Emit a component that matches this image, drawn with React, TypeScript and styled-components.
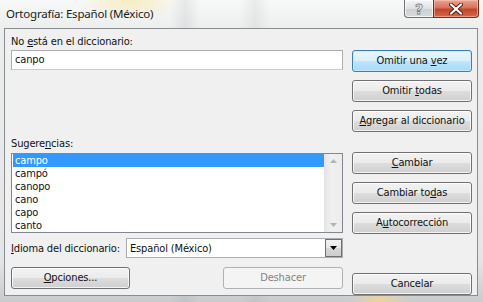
import React from 'react';
import styled, { createGlobalStyle } from 'styled-components';

const GlobalStyle = createGlobalStyle`
  html, body {
    margin: 0;
    padding: 0;
  }
  body {
    width: 483px;
    height: 302px;
    overflow: hidden;
    font-family: "DejaVu Sans Condensed", "Liberation Sans", sans-serif;
    font-size: 11px;
    letter-spacing: -0.15px;
    color: #111;
  }
`;

const Window = styled.div`
  width: 483px;
  height: 302px;
  display: flex;
  flex-direction: column;
  box-sizing: border-box;
  background:
    radial-gradient(ellipse 50px 18px at 130px 2px, rgba(250, 232, 170, 0.7), rgba(250, 232, 170, 0) 100%),
    radial-gradient(ellipse 30px 8px at 380px 300px, rgba(245, 215, 140, 0.8), rgba(245, 215, 140, 0) 100%),
    linear-gradient(to right, rgba(0, 0, 0, 0) 170px, rgba(120, 125, 130, 0.12) 185px, rgba(0, 0, 0, 0) 200px,
      rgba(0, 0, 0, 0) 240px, rgba(120, 125, 130, 0.1) 255px, rgba(0, 0, 0, 0) 270px),
    linear-gradient(to bottom, #f7f8f8, #eceded 30px, #e4e5e6 260px, #c9cbcd);
`;

const TitleBar = styled.div`
  height: 28px;
  display: flex;
  align-items: flex-start;
  padding-left: 6px;
`;

const Title = styled.div`
  font-family: "Noto Sans", "Open Sans", sans-serif;
  font-size: 11.5px;
  line-height: 16px;
  padding-top: 6px;
  color: #1a1a1a;
  letter-spacing: -0.2px;
`;

const Controls = styled.div`
  margin-left: auto;
  margin-right: 4px;
  display: flex;
`;

const HelpButton = styled.div`
  width: 29px;
  height: 18px;
  box-sizing: border-box;
  border: 1px solid #6e7276;
  border-top: none;
  border-right: none;
  border-bottom-left-radius: 4px;
  background: linear-gradient(to bottom, #f4f5f6, #dfe1e3 50%, #cdd0d3 51%, #d9dcde);
  box-shadow: inset 0 0 0 1px rgba(255, 255, 255, 0.7);
  display: flex;
  align-items: center;
  justify-content: center;
  font-family: "DejaVu Sans", sans-serif;
  font-size: 14px;
  font-weight: bold;
  color: #f4f4f4;
  -webkit-text-stroke: 0.8px #7a7e83;
`;

const CloseButton = styled.div`
  width: 46px;
  height: 18px;
  box-sizing: border-box;
  border: 1px solid #7a2a1c;
  border-top: none;
  border-bottom-right-radius: 4px;
  background: linear-gradient(to bottom, #e8a493, #d6735c 45%, #c2442a 55%, #d26a4a);
  box-shadow: inset 0 0 0 1px rgba(255, 210, 190, 0.5);
  display: flex;
  align-items: center;
  justify-content: center;
`;

const Client = styled.div`
  flex: 1;
  margin: 0 5px 6px 4px;
  border: 1px solid #8a8d90;
  background: #f0f0f0;
  padding: 6px 5px 0 6px;
  display: flex;
  gap: 9px;
`;

const LeftCol = styled.div`
  width: 332px;
  display: flex;
  flex-direction: column;
`;

const RightCol = styled.div`
  width: 120px;
  display: flex;
  flex-direction: column;
`;

const Label = styled.div<{ $mt?: number; $mb?: number }>`
  height: 13px;
  line-height: 13px;
  margin-top: ${(p) => p.$mt ?? 0}px;
  margin-bottom: ${(p) => p.$mb ?? 0}px;
  white-space: nowrap;
`;

const U = styled.span`
  text-decoration: underline;
  text-underline-offset: 1px;
`;

const TextBox = styled.div`
  height: 20px;
  box-sizing: border-box;
  border: 1px solid #abadb3;
  border-bottom-color: #c8ccd2;
  background: #fff;
  padding-left: 3px;
  line-height: 18px;
`;

const ListBox = styled.div`
  height: 80px;
  box-sizing: border-box;
  border: 1px solid #828790;
  background: #fff;
  display: flex;
`;

const Items = styled.div`
  flex: 1;
  padding: 0 0 0 1px;
`;

const Item = styled.div<{ $selected?: boolean }>`
  height: 13px;
  line-height: 13px;
  padding-left: 2px;
  background: ${(p) => (p.$selected ? '#3399ff' : 'transparent')};
  color: ${(p) => (p.$selected ? '#fff' : '#111')};
`;

const ScrollBar = styled.div`
  width: 17px;
  background: linear-gradient(to right, #e6e6e6, #f0f0f0 40%, #ececec);
  border-left: 1px solid #e2e2e2;
  display: flex;
  flex-direction: column;
  justify-content: space-between;
  align-items: center;
  padding: 5px 0 5px;
`;

const LangRow = styled.div`
  margin-top: 5px;
  height: 20px;
  display: flex;
  align-items: center;
  justify-content: space-between;
`;

const Select = styled.div`
  width: 217px;
  height: 20px;
  box-sizing: border-box;
  border: 1px solid #abadb3;
  background: #fff;
  display: flex;
  align-items: center;
  padding-left: 3px;
`;

const SelectText = styled.div`
  flex: 1;
`;

const DropButton = styled.div`
  width: 17px;
  height: 18px;
  box-sizing: border-box;
  border: 1px solid #707070;
  background: linear-gradient(to bottom, #f2f2f2, #e6e6e6 50%, #d6d6d6 51%, #cdcdcd);
  display: flex;
  align-items: center;
  justify-content: center;
`;

const BottomRow = styled.div`
  margin-top: 9px;
  display: flex;
  justify-content: space-between;
`;

const Stack = styled.div<{ $mt: number }>`
  margin-top: ${(p) => p.$mt}px;
  display: flex;
  flex-direction: column;
  gap: 8px;
`;

const Button = styled.div<{ $w?: number; $default?: boolean; $disabled?: boolean }>`
  width: ${(p) => p.$w ?? 120}px;
  height: 22px;
  box-sizing: border-box;
  border: 1px solid ${(p) => (p.$disabled ? '#adb2b5' : p.$default ? '#3c7fb1' : '#707070')};
  border-radius: 3px;
  background: ${(p) =>
    p.$disabled
      ? '#f4f4f4'
      : p.$default
      ? 'linear-gradient(to bottom, #eaf6fd, #d9f0fc 50%, #bee6fd 51%, #a7d9f5)'
      : 'linear-gradient(to bottom, #f2f2f2, #ebebeb 50%, #dddddd 51%, #cfcfcf)'};
  box-shadow: inset 0 0 0 1px ${(p) => (p.$disabled ? 'transparent' : p.$default ? '#c8eaf9' : 'rgba(255,255,255,0.75)')};
  color: ${(p) => (p.$disabled ? '#838383' : '#111')};
  display: flex;
  align-items: center;
  justify-content: center;
  white-space: nowrap;
  padding-bottom: 1px;
`;

const Flex = styled.div`
  flex: 1;
`;

const suggestions = ['campo', 'campó', 'canopo', 'cano', 'capo', 'canto'];

const Arrow: React.FC<{ up?: boolean; color?: string }> = ({ up, color = '#b4b4b4' }) => (
  <svg width="7" height="4" viewBox="0 0 7 4">
    <path d={up ? 'M0 4 L3.5 0 L7 4 Z' : 'M0 0 L3.5 4 L7 0 Z'} fill={color} />
  </svg>
);

export default function App() {
  return (
    <>
      <GlobalStyle />
      <Window>
        <TitleBar>
          <Title>Ortografía: Español (México)</Title>
          <Controls>
            <HelpButton>?</HelpButton>
            <CloseButton>
              <svg width="14" height="12" viewBox="0 0 14 12">
                <path d="M2 1.5 L12 10.5 M12 1.5 L2 10.5" stroke="#5a1a10" strokeWidth="4" strokeLinecap="round" />
                <path d="M2 1.5 L12 10.5 M12 1.5 L2 10.5" stroke="#fff" strokeWidth="2.2" strokeLinecap="round" />
              </svg>
            </CloseButton>
          </Controls>
        </TitleBar>
        <Client>
          <LeftCol>
            <Label $mb={2}>
              No <U>e</U>stá en el diccionario:
            </Label>
            <TextBox>canpo</TextBox>
            <Label $mt={67} $mb={3}>
              Sugere<U>n</U>cias:
            </Label>
            <ListBox>
              <Items>
                {suggestions.map((s, i) => (
                  <Item key={s} $selected={i === 0}>
                    {s}
                  </Item>
                ))}
              </Items>
              <ScrollBar>
                <Arrow up />
                <Arrow />
              </ScrollBar>
            </ListBox>
            <LangRow>
              <span>
                <U>I</U>dioma del diccionario:
              </span>
              <Select>
                <SelectText>Español (México)</SelectText>
                <DropButton>
                  <Arrow color="#000" />
                </DropButton>
              </Select>
            </LangRow>
            <BottomRow>
              <Button $w={119}>
                <U>O</U>pciones...
              </Button>
              <Button $disabled>Deshacer</Button>
            </BottomRow>
          </LeftCol>
          <RightCol>
            <Stack $mt={15}>
              <Button $default>
                Omitir una&nbsp;<U>v</U>ez
              </Button>
              <Button>
                Omitir&nbsp;<U>t</U>odas
              </Button>
              <Button>
                <U>A</U>gregar al diccionario
              </Button>
            </Stack>
            <Stack $mt={20}>
              <Button>
                <U>C</U>ambiar
              </Button>
              <Button>
                Cambiar to<U>d</U>as
              </Button>
              <Button>
                A<U>u</U>tocorrección
              </Button>
            </Stack>
            <Flex />
            <Button>Cancelar</Button>
          </RightCol>
        </Client>
      </Window>
    </>
  );
}
